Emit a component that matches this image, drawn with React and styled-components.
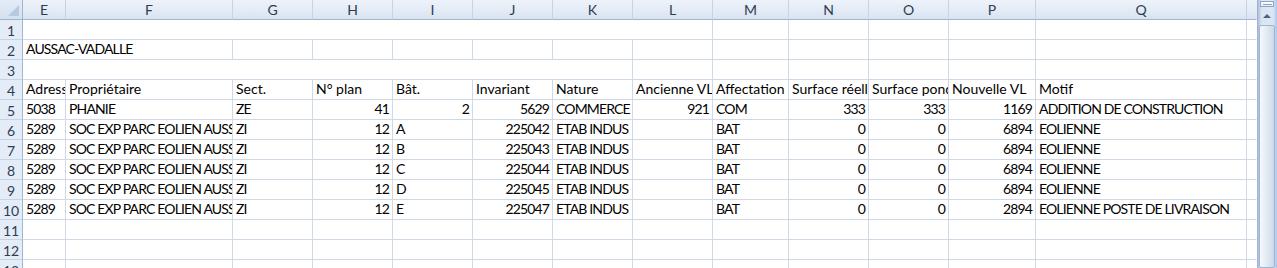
import styled, { createGlobalStyle } from "styled-components";

const GlobalStyle = createGlobalStyle`
	html, body {
		margin: 0;
		padding: 0;
		background: #ffffff;
		overflow: hidden;
	}
	body {
		font-family: Lato, "Liberation Sans", sans-serif;
	}
`;

const COLUMNS = [
	{ key: "E", width: 43 },
	{ key: "F", width: 167 },
	{ key: "G", width: 80 },
	{ key: "H", width: 80 },
	{ key: "I", width: 80 },
	{ key: "J", width: 80 },
	{ key: "K", width: 80 },
	{ key: "L", width: 80 },
	{ key: "M", width: 76 },
	{ key: "N", width: 80 },
	{ key: "O", width: 80 },
	{ key: "P", width: 87 },
	{ key: "Q", width: 211 },
	{ key: "R", width: 10 },
];

const TEMPLATE = `23px ${COLUMNS.map((c) => `${c.width}px`).join(" ")}`;

const Window = styled.div`
	display: flex;
	width: 1277px;
	height: 268px;
	overflow: hidden;
	background: #ffffff;
`;

const Sheet = styled.div`
	flex: 1;
	display: flex;
	flex-direction: column;
	overflow: hidden;
`;

const Row = styled.div`
	display: grid;
	grid-template-columns: ${TEMPLATE};
	height: 20px;
	flex-shrink: 0;
`;

const Corner = styled.div`
	position: relative;
	box-sizing: border-box;
	background: linear-gradient(#e4ecf7, #d5e0ef);
	border-right: 1px solid #9eb6ce;
	border-bottom: 1px solid #9eb6ce;

	&::after {
		content: "";
		position: absolute;
		right: 3px;
		bottom: 3px;
		width: 0;
		height: 0;
		border-left: 11px solid transparent;
		border-bottom: 11px solid #b7c9e0;
	}
`;

const ColHead = styled.div`
	box-sizing: border-box;
	display: flex;
	align-items: center;
	justify-content: center;
	background: linear-gradient(#eef3fa, #e3ebf6 55%, #d9e3f1);
	border-right: 1px solid ${(p) => (p.$last ? "transparent" : "#c5d3e6")};
	border-bottom: 1px solid #9eb6ce;
	color: #2f3d52;
	font-size: 14px;
	overflow: hidden;
`;

const RowHead = styled.div`
	box-sizing: border-box;
	display: flex;
	align-items: center;
	justify-content: center;
	background: #e4ecf7;
	border-right: 1px solid #9eb6ce;
	border-bottom: 1px solid #c5d3e6;
	color: #2f3d52;
	font-size: 14px;
	padding-top: 1px;
`;

const Cell = styled.div`
	box-sizing: border-box;
	grid-column: span ${(p) => p.$span || 1};
	display: flex;
	align-items: flex-end;
	justify-content: ${(p) => (p.$num ? "flex-end" : "flex-start")};
	padding: 0 ${(p) => (p.$num ? 3 : 2)}px 2px ${(p) => (p.$num ? 2 : 3)}px;
	border-right: 1px solid ${(p) => (p.$open ? "transparent" : "#d0d7e5")};
	border-bottom: 1px solid #d0d7e5;
	color: #000000;
	font-size: 14px;
	line-height: 16px;
	letter-spacing: ${(p) => (p.$tight ? "-0.85px" : "0")};
	white-space: nowrap;
	overflow: ${(p) => (p.$spill ? "visible" : "hidden")};
`;

const ScrollBar = styled.div`
	width: 20px;
	flex-shrink: 0;
	display: flex;
	flex-direction: column;
	box-sizing: border-box;
	background: linear-gradient(90deg, #aebfd8, #dce6f3 20%, #dce6f3 80%, #a9c5ee);
	border-left: 1px solid #9fb3d0;
	padding: 1px 2px 0 1px;
	gap: 1px;
`;

const SplitBox = styled.div`
	height: 6px;
	box-sizing: border-box;
	margin: 0 1px;
	border: 1px solid #8ea4c4;
	background: linear-gradient(#ffffff, #e6edf7);
	display: flex;
	align-items: center;
	justify-content: center;

	&::before {
		content: "";
		width: 9px;
		height: 1px;
		background: #8ea4c4;
	}
`;

const ArrowButton = styled.div`
	height: 16px;
	display: flex;
	align-items: center;
	justify-content: center;

	&::before {
		content: "";
		width: 0;
		height: 0;
		border-left: 4px solid transparent;
		border-right: 4px solid transparent;
		border-bottom: 4px solid #4e6387;
	}
`;

const Thumb = styled.div`
	flex: 1;
	box-sizing: border-box;
	border: 1px solid #9fb5d3;
	border-radius: 2px;
	background: linear-gradient(90deg, #f5f8fc, #e4ebf4 45%, #cdd8e7);
`;

const headers = [
	"Adresse",
	"Propriétaire",
	"Sect.",
	"N° plan",
	"Bât.",
	"Invariant",
	"Nature",
	"Ancienne VL",
	"Affectation",
	"Surface réelle",
	"Surface pondérée",
	"Nouvelle VL",
	"Motif",
];

const OWNER = "SOC EXP PARC EOLIEN AUSSAC-VADALLE";

const records = [
	["5038", "PHANIE", "ZE", 41, 2, 5629, "COMMERCE", 921, "COM", 333, 333, 1169, "ADDITION DE CONSTRUCTION"],
	["5289", OWNER, "ZI", 12, "A", 225042, "ETAB INDUS", "", "BAT", 0, 0, 6894, "EOLIENNE"],
	["5289", OWNER, "ZI", 12, "B", 225043, "ETAB INDUS", "", "BAT", 0, 0, 6894, "EOLIENNE"],
	["5289", OWNER, "ZI", 12, "C", 225044, "ETAB INDUS", "", "BAT", 0, 0, 6894, "EOLIENNE"],
	["5289", OWNER, "ZI", 12, "D", 225045, "ETAB INDUS", "", "BAT", 0, 0, 6894, "EOLIENNE"],
	["5289", OWNER, "ZI", 12, "E", 225047, "ETAB INDUS", "", "BAT", 0, 0, 2894, "EOLIENNE POSTE DE LIVRAISON"],
];

// capitals and digits run wider in Lato than in Calibri, so tighten them
const isTight = (v) => !/[a-z]/.test(String(v));

const emptyCells = (from) =>
	COLUMNS.slice(from).map((c) => <Cell key={c.key} $open={c.key === "R"} />);

const App = () => {
	return (
		<Window>
			<GlobalStyle />
			<Sheet>
				<Row>
					<Corner />
					{COLUMNS.map((c) => (
						<ColHead key={c.key} $last={c.key === "R"}>
							{c.key === "R" ? "" : c.key}
						</ColHead>
					))}
				</Row>

				<Row>
					<RowHead>1</RowHead>
					<Cell $span={8} />
					{emptyCells(8)}
				</Row>

				<Row>
					<RowHead>2</RowHead>
					<Cell $span={2} $spill $tight>
						AUSSAC-VADALLE
					</Cell>
					{emptyCells(2)}
				</Row>

				<Row>
					<RowHead>3</RowHead>
					<Cell $span={7} />
					{emptyCells(7)}
				</Row>

				<Row>
					<RowHead>4</RowHead>
					{headers.map((h) => (
						<Cell key={h}>{h}</Cell>
					))}
					<Cell $open />
				</Row>

				{records.map((rec, i) => (
					<Row key={i}>
						<RowHead>{i + 5}</RowHead>
						{rec.map((v, j) => (
							<Cell key={j} $num={typeof v === "number"} $tight={isTight(v)}>
								{v}
							</Cell>
						))}
						<Cell $open />
					</Row>
				))}

				{[11, 12, 13].map((n) => (
					<Row key={n}>
						<RowHead>{n}</RowHead>
						{emptyCells(0)}
					</Row>
				))}
			</Sheet>

			<ScrollBar>
				<SplitBox />
				<ArrowButton />
				<Thumb />
			</ScrollBar>
		</Window>
	);
};

export default App;
